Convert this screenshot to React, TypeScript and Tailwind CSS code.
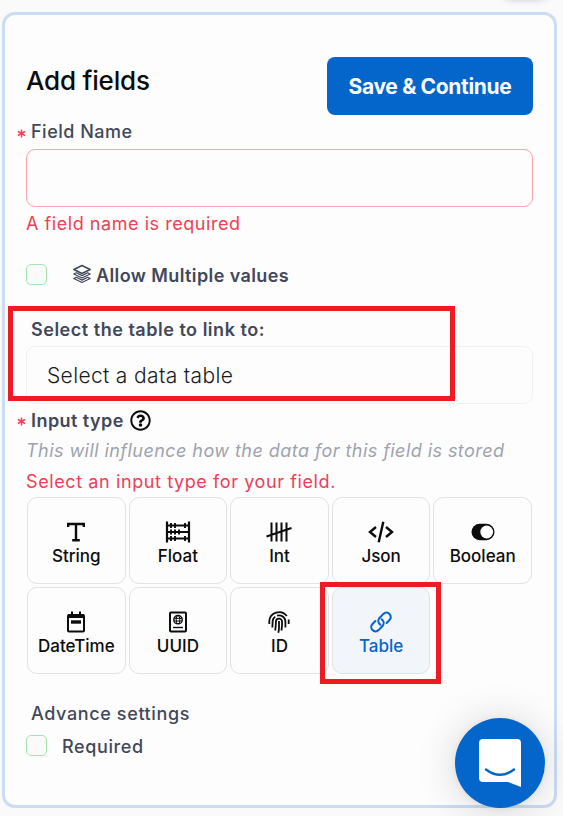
import type { ReactNode } from "react";
import { FaRegQuestionCircle } from "react-icons/fa";

function LayersIcon() {
  return (
    <svg
      className="ml-[25px]"
      width="20"
      height="20"
      viewBox="0 0 20 20"
      fill="none"
      stroke="currentColor"
      strokeWidth="1.5"
      strokeLinejoin="round"
    >
      <path d="M10 1.500L18.200 5.500L10 9.500L1.800 5.500Z" />
      <path d="M4.300 8.800L1.800 10L10 14L18.200 10L15.700 8.800L10 11.600Z" strokeWidth="1.200" />
      <path d="M4.300 13.300L1.800 14.500L10 18.500L18.200 14.500L15.700 13.300L10 16.100Z" strokeWidth="1.200" />
    </svg>
  );
}

function TextIcon() {
  return (
    <svg width="22" height="22" viewBox="0 0 22 22" fill="none" stroke="currentColor" strokeWidth="2.400">
      <path d="M3.200 6V3h15.600v3M11 3v16M7.200 19.300h7.600" />
    </svg>
  );
}

function AbacusIcon() {
  return (
    <svg width="26" height="22" viewBox="0 0 26 22" fill="none" stroke="currentColor" strokeWidth="2.200">
      <path d="M2 .5v21M24 .5v21" />
      <path strokeWidth="1.900" d="M2 4.500h22M2 11h22M2 17.500h22" />
      <path strokeWidth="1.900" d="M6 2v5M10 2v5M20 2v5M6 8.500v5M10 8.500v5M14 8.500v5M6 15v5M10 15v5M20 15v5" />
    </svg>
  );
}

function TallyIcon() {
  return (
    <svg width="26" height="22" viewBox="0 0 26 22" fill="none" stroke="currentColor" strokeWidth="2">
      <path d="M5.500 1.500v19M10.500 1.500v19M15.500 1.500v19M20.500 1.500v19M.5 15.500l25-8.500" />
    </svg>
  );
}

function CodeIcon() {
  return (
    <svg width="26" height="22" viewBox="0 0 26 22" fill="none" stroke="currentColor" strokeWidth="2.400">
      <path d="M8 6l-6 5 6 5M18 6l6 5-6 5M15.300.8l-4.600 20.400" />
    </svg>
  );
}

function ToggleIcon() {
  return (
    <svg width="24" height="22" viewBox="0 0 24 22">
      <rect x=".5" y="2.800" width="23" height="16.400" rx="8.200" fill="currentColor" />
      <circle cx="15.700" cy="11" r="6.400" fill="#fdfdfd" />
    </svg>
  );
}

function CalendarIcon() {
  return (
    <svg width="22" height="22" viewBox="0 0 22 22" fill="none" stroke="currentColor" strokeWidth="2">
      <rect x="3" y="4" width="16" height="16.500" rx="1" />
      <path d="M3 5h16" strokeWidth="4" />
      <path d="M7 .5v4M15 .5v4" />
      <path d="M6 11h10" strokeWidth="3.400" />
    </svg>
  );
}

function PassportIcon() {
  return (
    <svg width="22" height="22" viewBox="0 0 22 22" fill="none" stroke="currentColor">
      <rect x="3" y="1.500" width="16" height="19" rx="1" strokeWidth="2" />
      <circle cx="11" cy="8.700" r="4.200" strokeWidth="1.400" />
      <ellipse cx="11" cy="8.700" rx="1.800" ry="4.200" />
      <path d="M7 7.400h8M7 10h8" />
      <path d="M6 16.500h10" strokeWidth="1.400" />
    </svg>
  );
}

function FingerprintIcon() {
  return (
    <svg width="22" height="22" viewBox="0 0 22 22" fill="none" stroke="currentColor" strokeWidth="1.800">
      <path d="M1.300 13V10.500a9.700 9.400 0 0 1 17.500-5.500M20.700 8.500V13" />
      <path d="M4.300 16.500Q4.600 13.500 4.600 10.800a6.400 6.400 0 0 1 2.600-5.200M9 4.700a6.400 6.400 0 0 1 8.400 6.100v5.700" />
      <path d="M7.200 19.500Q7.900 15.500 7.900 10.800a3.100 3.100 0 0 1 6.200 0Q14.100 15.500 13.500 19.500" />
      <path d="M11 10v6.500Q11 19.500 10.300 21.800" />
    </svg>
  );
}

function LinkIcon() {
  return (
    <svg
      width="22"
      height="22"
      viewBox="0 0 22 22"
      fill="none"
      stroke="currentColor"
      strokeWidth="2.100"
      strokeLinecap="round"
    >
      <path d="M10.300 13.700a4.500 4.500 0 0 1-1.200-6.200l4.300-4.600a4.300 4.300 0 0 1 6.100 6.100l-2.900 2.900" />
      <path d="M11.700 8.300a4.500 4.500 0 0 1 1.200 6.200l-4.300 4.600a4.300 4.300 0 0 1-6.100-6.100l2.900-2.900" />
    </svg>
  );
}

type TypeTile = { label: string; icon: ReactNode; active?: boolean };

const tiles: TypeTile[] = [
  { label: "String", icon: <TextIcon /> },
  { label: "Float", icon: <AbacusIcon /> },
  { label: "Int", icon: <TallyIcon /> },
  { label: "Json", icon: <CodeIcon /> },
  { label: "Boolean", icon: <ToggleIcon /> },
  { label: "DateTime", icon: <CalendarIcon /> },
  { label: "UUID", icon: <PassportIcon /> },
  { label: "ID", icon: <FingerprintIcon /> },
  { label: "Table", icon: <LinkIcon />, active: true },
];

function Tile({ label, icon, active }: TypeTile) {
  return (
    <button
      className={`flex h-[87px] flex-col items-center rounded-[10px] border border-[#e2e2e3] pt-[22px] text-[17px] leading-6 font-medium ${
        active ? "bg-[#f2f5fa] text-[#0666cb]" : "text-[#0c0c0d]"
      }`}
    >
      <span className="flex h-[23px] items-center justify-center">{icon}</span>
      <span className="pt-px">{label}</span>
    </button>
  );
}

function Checkbox() {
  return <span className="size-[21px] shrink-0 rounded-[5px] border border-[#a5e3b0] bg-[#fafafa]" />;
}

function RequiredMark() {
  return (
    <svg width="14" height="24" viewBox="0 0 14 24" fill="none" stroke="#f43f54" strokeWidth="1.500">
      <path d="M4.500 9.500v8M1 11.500l7 4M8 11.500l-7 4" />
    </svg>
  );
}

export default function App() {
  return (
    <div className="relative h-[816px] w-[563px] overflow-hidden bg-[#fafafa] pt-3 pl-0.5 font-['Inter',sans-serif] text-[#42475a]">
      <div className="absolute -top-5 left-[502px] h-[19px] w-[46px] rounded-full bg-white shadow-[0_1px_6px_rgba(60,70,100,0.25)]" />
      <main className="flex h-[796px] w-[555px] flex-col rounded-[13px] border-3 border-[#cbddf3] bg-[#fdfdfd] pr-[21px] pl-[21px]">
        <header className="mt-[42px] flex h-[58px] items-start justify-between">
          <h1 className="pt-1.5 text-[26px] leading-9 font-medium tracking-[-0.2px] text-[#0c0c0d]">Add fields</h1>
          <button className="h-[58px] w-[206px] rounded-lg bg-[#0466ca] pt-0.5 text-[21px] font-bold tracking-[-0.320px] text-[#fafcff]">
            Save &amp; Continue
          </button>
        </header>

        <label className="-ml-[9px] mt-[5px] flex h-6 items-center text-[18px] leading-6 font-medium tracking-[0.5px]">
          <RequiredMark />
          Field Name
        </label>
        <input className="mt-[5px] h-[58px] w-full shrink-0 rounded-[9px] border border-[#fda4ae] bg-transparent" />
        <p className="mt-[5px] h-6 text-[18px] leading-6 tracking-[0.550px] text-[#ee4056]">A field name is required</p>

        <div className="mt-[26px] flex h-6 items-center">
          <Checkbox />
          <LayersIcon />
          <span className="ml-1 pt-[3px] text-[18px] leading-6 font-semibold tracking-[0.4px]">Allow Multiple values</span>
        </div>

        <div className="relative mt-[32px] flex flex-col">
          <div className="absolute -top-[12px] -left-[18px] h-[95px] w-[447px] border-5 border-[#ee1b24]" />
          <label className="ml-[5px] h-6 text-[18px] leading-6 font-semibold tracking-[0.520px]">
            Select the table to link to:
          </label>
          <div className="mt-[4px] flex h-[58px] items-center rounded-[9px] border border-[#f1f1f2] pt-0.5 pl-5 text-[21px] font-light tracking-[0.350px] text-[#1b1b1d]">
            Select a data table
          </div>
        </div>

        <div className="-ml-[9px] mt-[4px] flex h-6 items-center text-[18px] leading-6 font-semibold tracking-[0.450px]">
          <RequiredMark />
          <span className="pt-0.5">Input type</span>
          <FaRegQuestionCircle className="ml-[6px] text-[#0c0c0d]" size={21} />
        </div>
        <p className="mt-[7px] h-6 text-[18px] leading-6 tracking-[0.440px] text-[#9ea3ae] italic">
          This will influence how the data for this field is stored
        </p>
        <p className="mt-[7px] h-6 text-[18px] leading-6 tracking-[0.600px] text-[#ee4056]">
          Select an input type for your field.
        </p>

        <div className="relative mt-[3px] mr-px ml-px grid grid-cols-5 gap-[3px]">
          {tiles.map((tile) => (
            <Tile key={tile.label} {...tile} />
          ))}
          <div className="absolute top-[85px] left-[293px] h-[102px] w-[121px] border-5 border-[#ee1b24]" />
        </div>

        <h2 className="mt-[28px] ml-[5px] h-6 text-[18px] leading-6 font-medium tracking-[0.620px]">Advance settings</h2>
        <div className="mt-[7px] flex h-6 items-center gap-[15px] text-[18px] leading-6 font-medium tracking-[0.620px]">
          <Checkbox />
          <span className="pt-[3px]">Required</span>
        </div>
      </main>

      <button className="absolute top-[718px] left-[455px] flex size-[90px] items-center justify-center rounded-full bg-[#0466ca] shadow-[0_2px_40px_rgba(0,0,0,0.16),0_1px_6px_rgba(0,0,0,0.06)]">
        <svg width="42" height="48" viewBox="0 0 42 48">
          <path fill="#fff" d="M4 0h34a4 4 0 0 1 4 4v44l-13-5H4a4 4 0 0 1-4-4V4a4 4 0 0 1 4-4z" />
          <path fill="none" stroke="#0466ca" strokeWidth="2.400" strokeLinecap="round" d="M7 30.500q14 10.500 28 0" />
        </svg>
      </button>
    </div>
  );
}
